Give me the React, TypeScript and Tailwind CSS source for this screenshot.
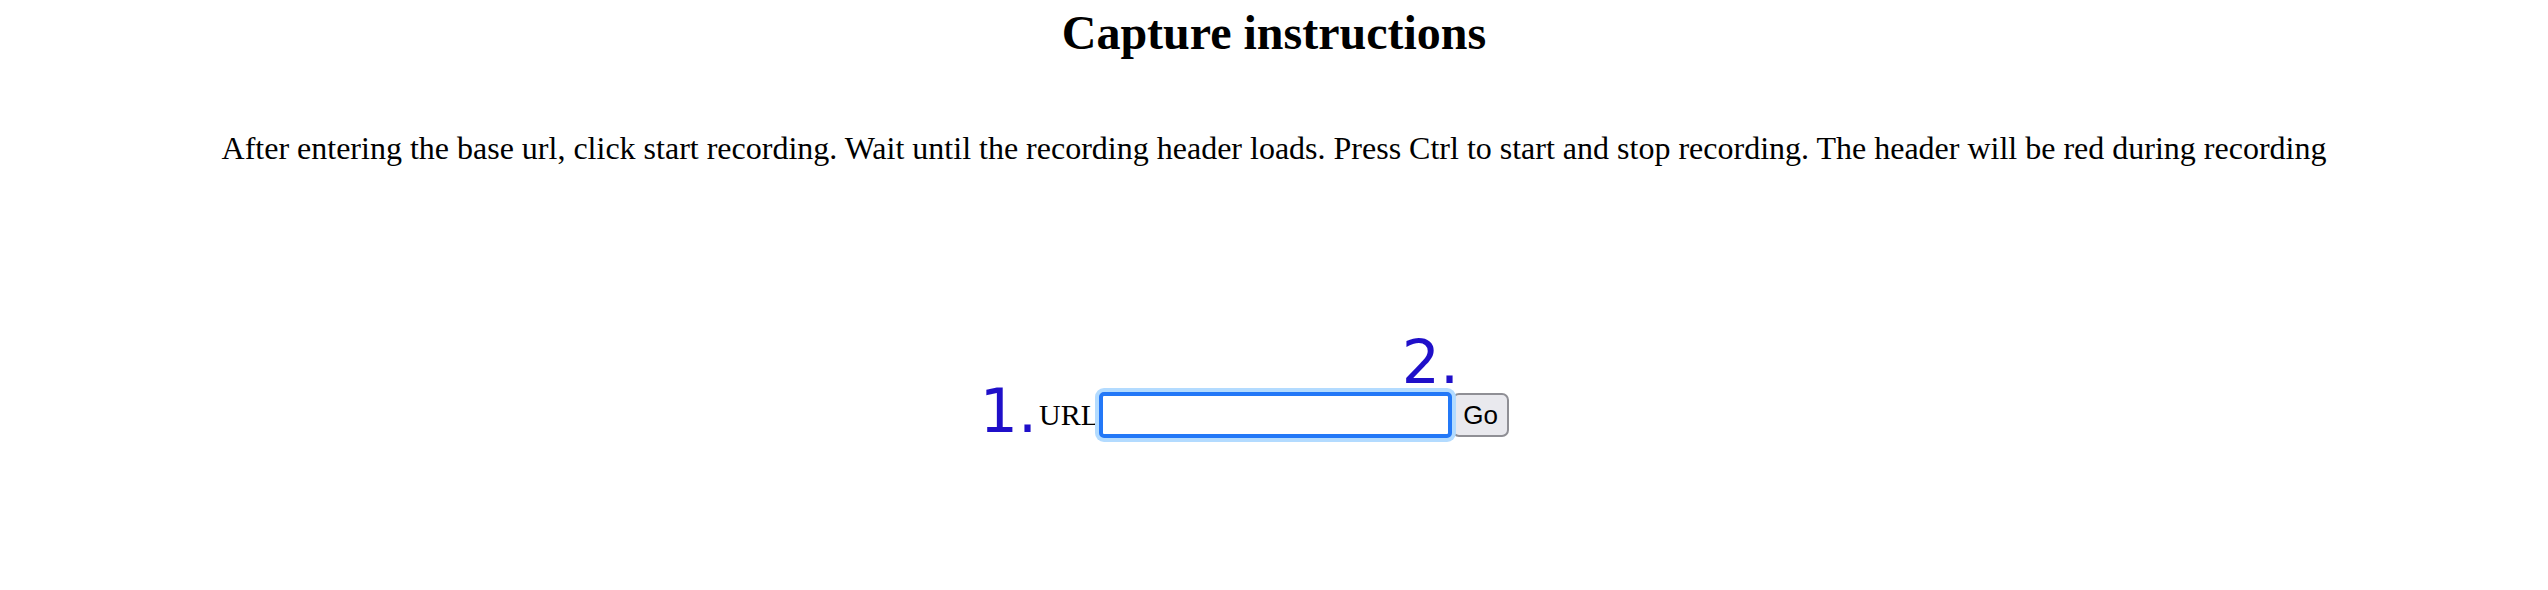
export default function App() {
    return (
        <div className="w-full min-h-[590px] bg-white text-black" style={{ fontFamily: '"Liberation Serif", "Times New Roman", serif' }}>
            <h1 className="pt-[6px] text-center text-[48px] leading-[54px] font-bold">Capture instructions</h1>
            <p className="mt-[70px] text-center text-[32px] leading-[36px]">
                After entering the base url, click start recording. Wait until the recording header loads. Press Ctrl to start and stop recording. The header will be red during recording
            </p>
            <div className="mt-[226px] flex items-center justify-center">
                <label className="relative text-[30px] leading-[34px]">
                    <span
                        className="absolute right-full top-[-17px] mr-[2px] text-[60px] leading-[60px] text-[#1f0fc9] whitespace-nowrap"
                        style={{ fontFamily: '"DejaVu Sans", sans-serif' }}
                    >
                        1.
                    </span>
                    URL
                </label>
                <div className="relative">
                    <input
                        type="text"
                        className="block w-[353px] h-[46px] bg-white border-[4px] border-[#2378f7] rounded-[5px] outline-none shadow-[0_0_0_4px_#b3dbff] px-1 text-[22px]"
                    />
                    <span
                        className="absolute right-[-7px] top-[-60px] text-[60px] leading-[60px] text-[#1f0fc9] whitespace-nowrap"
                        style={{ fontFamily: '"DejaVu Sans", sans-serif' }}
                    >
                        2.
                    </span>
                </div>
                <button
                    className="w-[57px] h-[44px] bg-[#e9e9ee] border-2 border-[#8f8f95] rounded-[7px] text-[26px] leading-none text-black"
                    style={{ fontFamily: '"Liberation Sans", Arial, sans-serif' }}
                >
                    Go
                </button>
            </div>
        </div>
    );
}
